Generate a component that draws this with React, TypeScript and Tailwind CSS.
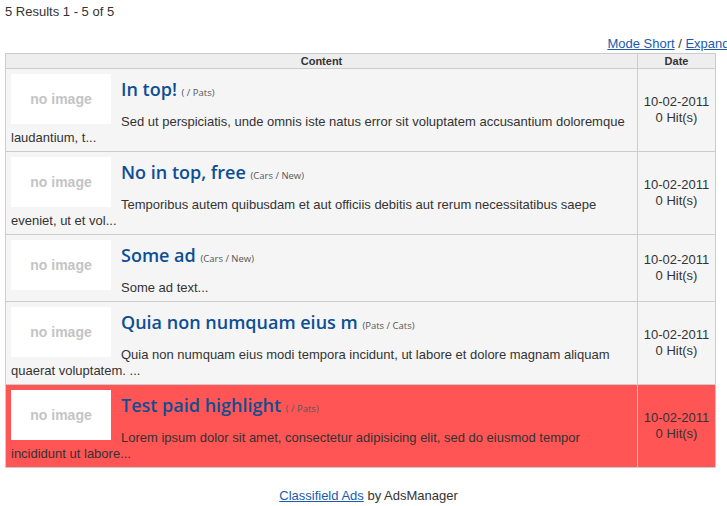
import React from 'react';

interface Ad {
  title: string;
  cat: string;
  text: string;
  highlight?: boolean;
}

const ads: Ad[] = [
  {
    title: 'In top!',
    cat: '( / Pats)',
    text: 'Sed ut perspiciatis, unde omnis iste natus error sit voluptatem accusantium doloremque laudantium, t...',
  },
  {
    title: 'No in top, free',
    cat: '(Cars / New)',
    text: 'Temporibus autem quibusdam et aut officiis debitis aut rerum necessitatibus saepe eveniet, ut et vol...',
  },
  {
    title: 'Some ad',
    cat: '(Cars / New)',
    text: 'Some ad text...',
  },
  {
    title: 'Quia non numquam eius m',
    cat: '(Pats / Cats)',
    text: 'Quia non numquam eius modi tempora incidunt, ut labore et dolore magnam aliquam quaerat voluptatem. ...',
  },
  {
    title: 'Test paid highlight',
    cat: '( / Pats)',
    text: 'Lorem ipsum dolor sit amet, consectetur adipisicing elit, sed do eiusmod tempor incididunt ut labore...',
    highlight: true,
  },
];

export default function App() {
  return (
    <div className="w-[727px] h-[506px] overflow-hidden bg-white font-['Liberation_Sans',Arial,sans-serif] text-[13px] leading-[15px] text-[#333]">
      <div className="w-[737px] px-[5px] pt-[4px]">
        <div>5 Results 1 - 5 of 5</div>
        <div className="mt-[17px] mr-[-12px] text-right whitespace-nowrap">
          <a href="#" className="text-[#1a5bb0] underline">Mode Short</a>
          {' / '}
          <a href="#" className="text-[#1a5bb0] underline">Expanded</a>
        </div>
        <table className="mt-[2px] w-[711px] border-collapse border border-[#ccc]">
          <thead>
            <tr className="bg-[#eee]">
              <th className="border border-[#ccc] text-[11px] leading-[14px] font-bold text-center text-[#333] p-0">Content</th>
              <th className="w-[78px] border border-[#ccc] text-[11px] leading-[14px] font-bold text-center text-[#333] p-0">Date</th>
            </tr>
          </thead>
          <tbody>
            {ads.map((ad, i) => (
              <tr key={i} className={ad.highlight ? 'bg-[#ff5555]' : 'bg-[#f5f5f5]'}>
                <td className="border border-[#ccc] p-[5px] align-top">
                  <div className="float-left w-[100px] h-[50px] mr-[10px] bg-white flex items-center justify-center text-[14px] font-bold text-[#c4c4c4]">
                    no image
                  </div>
                  <div className="mt-[3px] mb-[13px] h-[24px] font-['Open_Sans',sans-serif] text-[18px] leading-[24px] whitespace-nowrap">
                    <span className="font-semibold text-[#0d4f94]">{ad.title}</span>{' '}
                    <span className="text-[9.5px] leading-none text-[#555]">{ad.cat}</span>
                  </div>
                  <div className="leading-[16px]">{ad.text}</div>
                </td>
                <td className="border border-[#ccc] text-center align-middle leading-[16px] p-0">
                  10-02-2011
                  <br />
                  0 Hit(s)
                </td>
              </tr>
            ))}
          </tbody>
        </table>
        <div className="mt-[20px] text-center">
          <a href="#" className="text-[#1a5bb0] underline">Classifield Ads</a> by AdsManager
        </div>
      </div>
    </div>
  );
}
